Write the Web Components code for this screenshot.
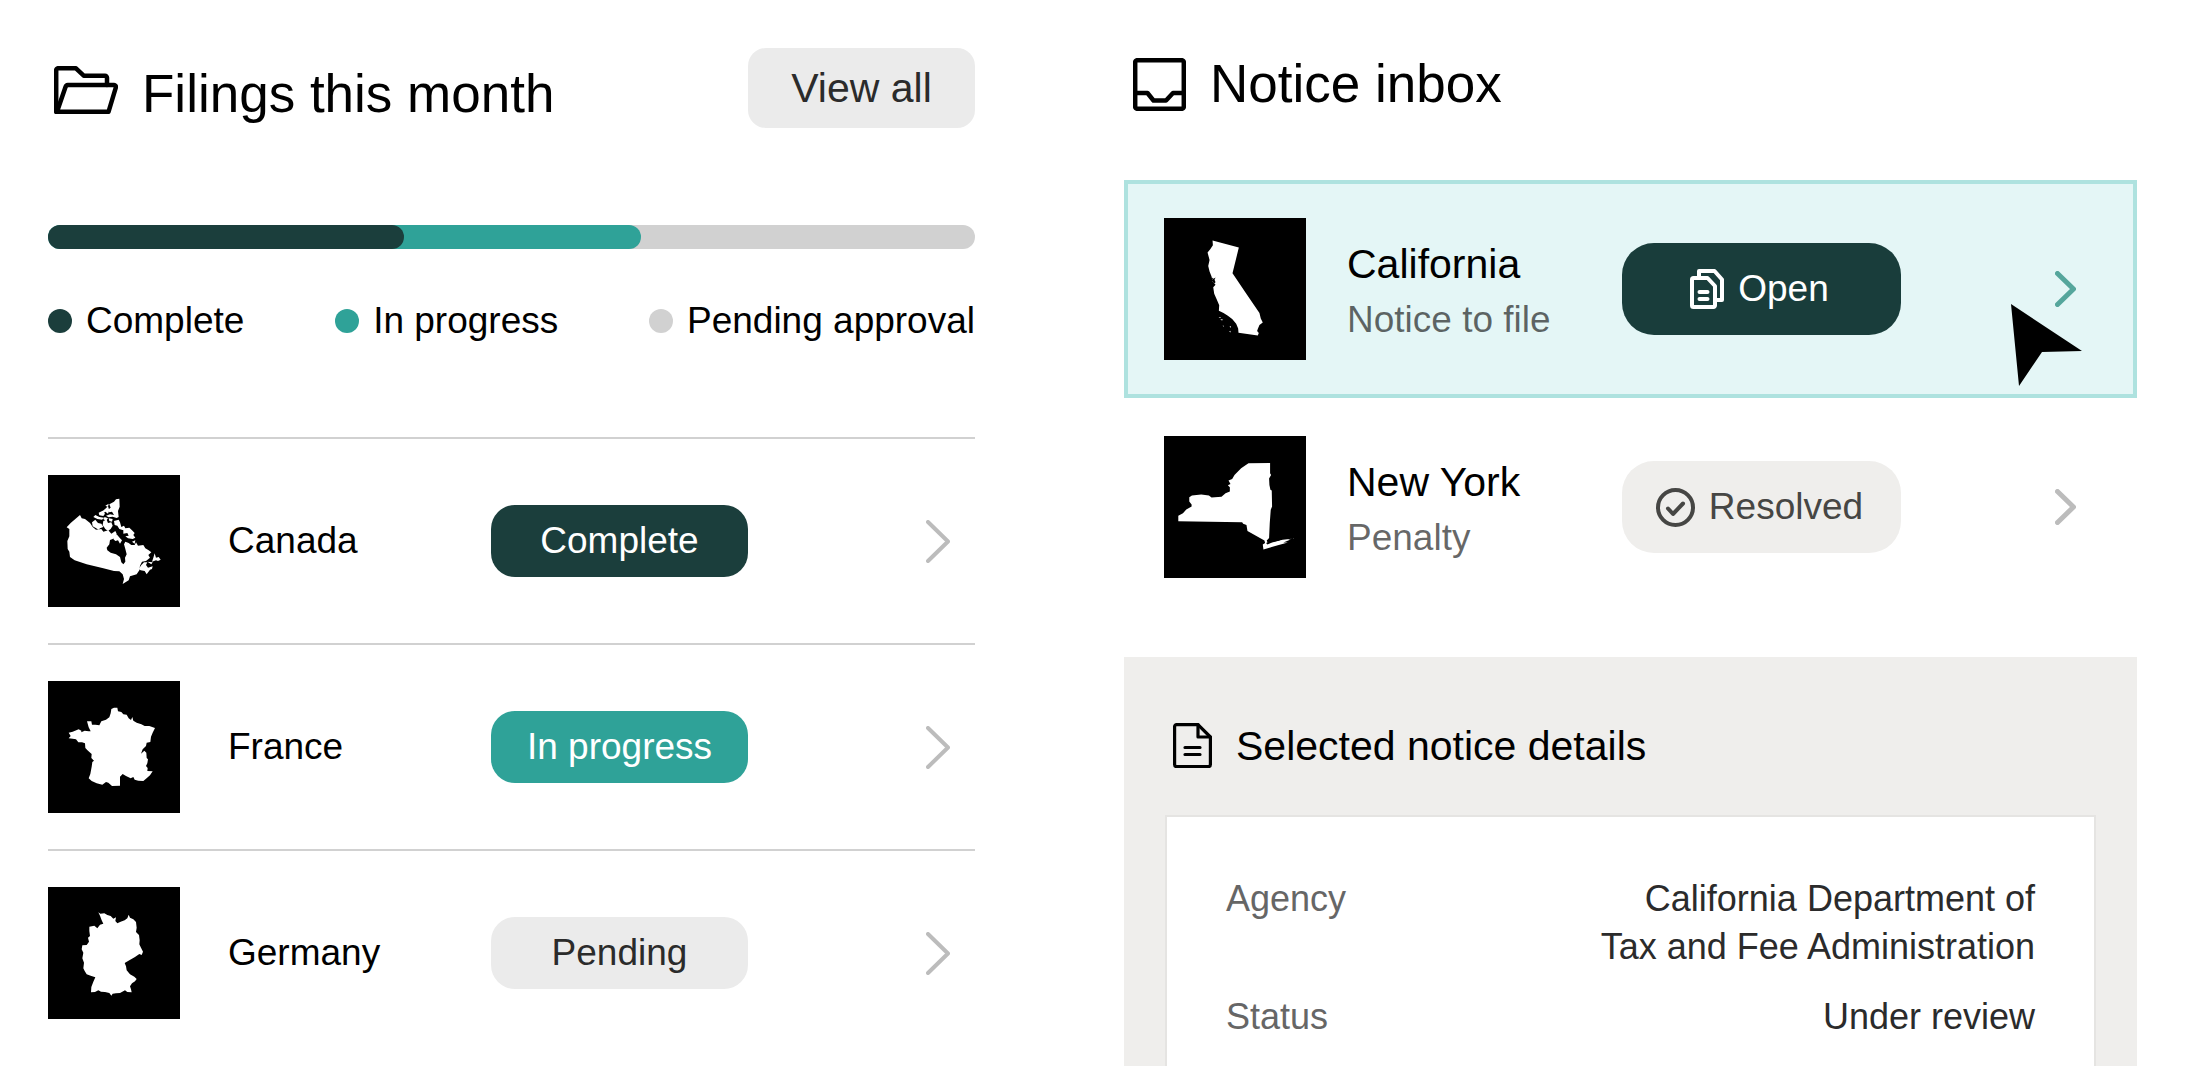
<!DOCTYPE html>
<html lang="en">
<head>
<meta charset="utf-8">
<title>Filings and notices</title>
<style>
  html, body { height: 100%; }
  body {
    margin: 0;
    overflow: hidden;
    background: #fff;
    color: #000;
    font-family: "Liberation Sans", Arial, sans-serif;
    --dark: #1b3e3c;
    --teal: #2fa298;
    --track: #d1d1d1;
    --soft: #ebebeb;
    --stone: #efeeec;
    --title: 53px;
    --large: 41px;
    --text: 37px;
    --small: 36px;
  }
</style>
</head>
<body>
<tax-dashboard>
  <filings-panel slot="filings">
    <panel-heading icon="folder" class="lower">Filings this month</panel-heading>
    <filing-row region="canada" status="complete">Canada<span slot="status">Complete</span></filing-row>
    <filing-row region="france" status="progress">France<span slot="status">In progress</span></filing-row>
    <filing-row region="germany" status="pending">Germany<span slot="status">Pending</span></filing-row>
  </filings-panel>
  <notice-panel slot="notices">
    <panel-heading icon="inbox">Notice inbox</panel-heading>
    <notice-row slot="rows" region="california" icon="documents" status="open" selected>
      California
      <span slot="kind">Notice to file</span>
      <span slot="status">Open</span>
    </notice-row>
    <notice-row slot="rows" region="newyork" icon="check" status="resolved">
      New York
      <span slot="kind">Penalty</span>
      <span slot="status">Resolved</span>
    </notice-row>
    <notice-details slot="details"></notice-details>
  </notice-panel>
</tax-dashboard>

<script>
const ICONS = {
  folder: { w: 64, h: 48, stroke: 4.5, body: `
    <path d="M2.200 46V4.200a2 2 0 0 1 2-2h17.500l8 7.500H51a2 2 0 0 1 2 2V19"/>
    <path d="M3 45.800 11.500 21a3 3 0 0 1 2.500-2h46a2 2 0 0 1 1.800 2.600L54.500 45.800z"/>` },
  inbox: { w: 53, h: 53, stroke: 4.5, body: `
    <rect x="2.200" y="2.200" width="48.600" height="48.600" rx="2"/>
    <path d="M2 35h12.500l6 7.500h12.500l7-7.500h11"/>` },
  document: { w: 39, h: 45, stroke: 3.2, body: `
    <path d="M25 1.600H3.600a2 2 0 0 0-2 2v38a2 2 0 0 0 2 2h31.800a2 2 0 0 0 2-2V14z"/>
    <path d="M25 1.600V14h12.400M12 24.500h15M12 31.500h15"/>` },
  documents: { w: 34, h: 40, stroke: 4, body: `
    <path d="M17.500 9H3.500A1.500 1.500 0 0 0 2 10.500v26A1.500 1.500 0 0 0 3.500 38h20a1.500 1.500 0 0 0 1.500-1.500V17z"/>
    <path d="M9 8V2h15.500L32 10.500V31h-6M9.500 23h8M9.500 30h8"/>` },
  check: { w: 39, h: 39, stroke: 4, body: `
    <circle cx="19.500" cy="19.500" r="17.500"/>
    <path d="m12 20.500 5 5.500L27 15.500"/>` },
  chevron: { w: 24, h: 43, stroke: 4, body: `<path d="m2 2 20 19.500L2 41"/>` },
  next: { w: 21, h: 36, stroke: 5, body: `<path d="m2.500 2.500 16 15.500-16 15.500"/>` },
}

const REGIONS = {
  canada: { box: "24 30 396 396", body: `
    <path d="M120 150 125 160 135 162 150 174 158 186 168 194 184 192 190 200 205 196 214 206 226 198 230 206 224 218 218 222 210 225 208 238 200 248 202 256 212 263 228 268 240 276 244 292 250 298 256 290 255 278 260 268 256 252 252 238 256 230 266 234 274 240 284 240 288 232 294 242 310 240 316 250 326 256 334 262 325 270 330 278 318 288 306 290 300 302 298 316 290 328 270 334 266 346 248 357 252 342 248 328 238 319 222 318 190 310 140 298 104 286 90 276 88 260 83 252 82 228 88 214 88 192 80 187 92 174Z"/>
    <path d="M238 101 239 125 234 138 236 156 230 159 218 155 206 157 198 152 210 148 222 150 216 140 208 142 204 134 212 128 208 118 222 110 228 103ZM222 168 236 164 240 172 244 186 252 182 256 190 268 188 276 196 284 204 280 210 286 218 278 222 264 220 256 214 266 212 262 204 250 206 250 196 238 192 232 182 224 180ZM156 172 166 164 174 174 184 176 190 186 180 190 176 194 166 188 158 184ZM190 168 200 164 204 174 214 172 218 182 212 192 204 198 196 192 188 180ZM176 143 188 137 195 146 190 153 178 151ZM196 131 204 124 208 136 204 146 196 140 188 146 188 138ZM166 150 178 156 192 158 186 164 172 162 160 156ZM194 156 204 160 198 168 190 162ZM206 160 218 162 216 170 208 168ZM196 122 206 116 204 126ZM222 214 230 208 240 220 246 226 240 236 234 226 226 228 220 222ZM276 230 286 226 284 236ZM344 265 348 278 356 276 362 284 354 288 348 286 336 290 340 278ZM304 300 312 292 322 292 318 300 324 308 338 304 336 312 330 314 320 328 314 318 302 316 296 312ZM322 290 338 292 334 298Z"/>` },
  france: { box: "24 33 396 396", body: `
    <path d="M214 117 222 113 232 113 234 124 244 126 250 133 260 134 266 145 273 150 277 141 280 152 290 158 304 163 314 168 328 168 345 174 338 188 333 200 331 216 320 218 318 228 308 238 303 251 313 242 319 248 320 264 324 268 322 280 318 288 323 294 322 303 338 304 330 316 318 326 310 333 295 332 284 329 280 321 272 325 258 318 248 312 240 320 240 347 216 348 205 338 198 336 187 344 170 340 155 333 146 325 151 312 155 290 157 276 162 272 154 264 155 252 144 242 136 234 135 220 126 217 115 217 108 208 98 206 86 205 92 198 86 188 98 185 116 178 124 182 124 187 134 182 146 184 152 184 146 172 141 154 154 154 156 164 166 164 178 166 184 154 198 149 208 142 212 130Z"/>` },
  germany: { box: "24 18 396 396", body: `
    <path d="M175 94 181 98 193 97 202 102 212 105 220 113 228 109 226 120 232 127 242 122 254 118 262 112 266 101 270 110 280 115 288 123 290 140 288 153 297 162 299 178 298 190 303 200 309 212 305 222 298 219 285 228 268 238 254 246 258 256 260 268 270 280 283 287 290 294 285 301 276 307 270 316 273 325 275 334 262 333 255 328 240 336 228 337 218 338 214 344 208 336 195 333 183 332 175 328 165 333 153 334 154 318 160 302 166 289 152 284 140 280 134 270 130 262 132 245 127 232 130 215 125 205 127 193 140 192 147 182 144 170 150 165 148 150 148 137 163 134 172 142 180 131 190 128 185 118 180 104Z"/>` },
  california: { box: "133 144 427 427", body: `
    <path d="M279 212 358 233 339 310 378 368 420 430 424 446 430 458 420 466 415 478 413 484 418 490 415 497 357 489 356 476 350 462 338 448 325 438 312 430 298 423 299 406 292 390 284 372 281 352 288 345 279 335 276 320 270 305 266 288 270 270 264 248 272 238 280 226Z"/>
    <path d="M276 322l6 5 6-4-3 7 3 7-5 5-3-7-7-3 6-3z" fill="#000"/>
    <path d="M297 444l5-2 2 3zM302 448l9 2-4 2zM309 468h4v3zM330 471l4-2v5zM329 485l4-2v5zM334 461l2 4z"/>` },
  newyork: { box: "133 78 427 427", body: `
    <path d="M387 160 452 159 452 190 455 195 449 206 450 225 453 240 457 242 458 290 454 300 451 340 449 385 442 392 445 400 462 396 490 390 524 386 500 400 470 408 432 419 430 404 437 400 435 392 384 364 381 346 371 342 368 337 176 334 176 318 190 310 200 299 216 290 216 284 209 275 209 262 217 257 245 254 268 257 276 263 306 261 318 250 331 245 331 232 325 226 333 222 327 212 338 207 345 195 365 175Z"/>
    <path d="M440 400 460 391 486 389 478 393 458 398 444 404ZM492 398 514 389 506 390 520 384 524 390 508 398Z" fill="#000"/>` },
}

class BaseElement extends HTMLElement {
  constructor() {
    super()
    this.root = this.attachShadow({ mode: "open" })
  }
  connectedCallback() {
    const tpl = document.createElement("template")
    tpl.innerHTML = this.template
    this.root.replaceChildren(tpl.content.cloneNode(true))
  }
  attr(name) { return this.getAttribute(name) || "" }
}

class LineIcon extends BaseElement {
  get template() {
    const { w, h, stroke, body } = ICONS[this.attr("name")]
    return `
<style>
:host { display: block; flex: none; }
svg { display: block; fill: none; stroke: currentColor; stroke-linecap: round; stroke-linejoin: round; }
</style>
<svg width="${w}" height="${h}" viewBox="0 0 ${w} ${h}" stroke-width="${stroke}" aria-hidden="true">${body}</svg>`
  }
}
customElements.define("line-icon", LineIcon)

class RegionThumb extends BaseElement {
  get template() {
    const { box, body } = REGIONS[this.attr("region")]
    return `
<style>
:host { display: block; aspect-ratio: 1; background: #000; }
svg { display: block; width: 100%; height: 100%; fill: #fff; }
</style>
<svg viewBox="${box}" aria-hidden="true">${body}</svg>`
  }
}
customElements.define("region-thumb", RegionThumb)

class PanelHeading extends BaseElement {
  get template() { return `
<style>
:host { display: flex; align-items: center; gap: 24px; padding-left: 6px; }
:host(.lower) { padding-top: 4px; }
:host([icon="inbox"]) { padding: 0 0 0 9px; }
h2 { margin: 0; font-size: var(--title); font-weight: 400; line-height: 64px; }
:host(.lower) h2 { padding-top: 8px; }
</style>
<line-icon name="${this.attr("icon")}"></line-icon>
<h2><slot></slot></h2>`
  }
}
customElements.define("panel-heading", PanelHeading)

class SplitProgress extends BaseElement {
  get template() { return `
<style>
:host { display: grid; height: 24px; border-radius: 12px; background: var(--track); }
i { grid-area: 1 / 1; border-radius: 12px; }
.progress { width: 64%; background: var(--teal); }
.complete { width: 38.4%; background: var(--dark); }
</style>
<i class="progress"></i>
<i class="complete"></i>`
  }
}
customElements.define("split-progress", SplitProgress)

class LegendItem extends BaseElement {
  get template() { return `
<style>
:host { display: flex; align-items: center; gap: 14px; font-size: var(--text); line-height: 48px; white-space: nowrap; }
i { width: 24px; height: 24px; border-radius: 50%; background: var(--track); }
:host([status="complete"]) i { background: var(--dark); }
:host([status="progress"]) i { background: var(--teal); }
</style>
<i></i><slot></slot>`
  }
}
customElements.define("legend-item", LegendItem)

class FilingRow extends BaseElement {
  get template() { return `
<style>
:host {
  display: grid;
  grid-template-columns: 132px 1fr 257px 227px;
  align-items: center;
  padding: 36px 0;
  border-top: 2px solid var(--track);
  font-size: var(--text);
}
.name { padding-left: 48px; }
.pill { border-radius: 24px; line-height: 72px; text-align: center; background: var(--soft); color: #2b2b2b; }
:host([status="complete"]) .pill { background: var(--dark); color: #fff; }
:host([status="progress"]) .pill { background: var(--teal); color: #fff; }
a { justify-self: end; margin-right: 25px; color: #bcbcbc; }
</style>
<region-thumb region="${this.attr("region")}"></region-thumb>
<span class="name"><slot></slot></span>
<span class="pill"><slot name="status"></slot></span>
<a href="#${this.attr("region")}" aria-label="Details"><line-icon name="chevron"></line-icon></a>`
  }
}
customElements.define("filing-row", FilingRow)

class FilingsPanel extends BaseElement {
  get template() { return `
<style>
:host { display: block; }
header { display: flex; justify-content: space-between; align-items: center; }
::slotted(panel-heading) { flex: 1; }
button {
  width: 227px;
  height: 80px;
  border: 0;
  border-radius: 18px;
  background: var(--soft);
  color: #2b2b2b;
  font: inherit;
  font-size: var(--large);
}
split-progress { margin-top: 97px; }
.legend { display: flex; justify-content: space-between; margin: 48px 0 92px; }
</style>
<header>
  <slot name="heading"></slot>
  <button type="button">View all</button>
</header>
<split-progress></split-progress>
<div class="legend">
  <legend-item status="complete">Complete</legend-item>
  <legend-item status="progress">In progress</legend-item>
  <legend-item status="pending">Pending approval</legend-item>
</div>
<slot></slot>`
  }
  connectedCallback() {
    this.querySelector("panel-heading").slot = "heading"
    super.connectedCallback()
  }
}
customElements.define("filings-panel", FilingsPanel)

class NoticeRow extends BaseElement {
  get template() {
    const selected = this.hasAttribute("selected")
    const tag = this.attr("status") == "open" ? "button" : "span"
    return `
<style>
:host {
  position: relative;
  display: grid;
  grid-template-columns: 142px 1fr 279px 232px;
  align-items: center;
  padding: 34px 0 34px 36px;
  border: 4px solid transparent;
  font-size: var(--text);
}
:host([selected]) { background: #e4f6f6; border-color: #aee2df; }
.text { padding: 6px 0 0 41px; line-height: 56px; white-space: nowrap; }
.name { font-size: var(--large); }
.kind { color: rgba(0, 0, 0, .6); }
.pill {
  display: flex;
  justify-content: center;
  align-items: center;
  gap: 14px;
  box-sizing: border-box;
  width: 100%;
  height: 92px;
  padding: 0 4px 0 0;
  border: 0;
  border-radius: 32px;
  background: var(--stone);
  color: #464644;
  font: inherit;
}
:host([status="open"]) .pill { background: #193d3b; color: #fff; }
a { justify-self: end; margin-right: 57px; color: #bcbcbc; }
:host([selected]) a { color: #55a69c; }
.cursor { position: absolute; right: 51px; bottom: 8px; }
</style>
<region-thumb region="${this.attr("region")}"></region-thumb>
<div class="text">
  <div class="name"><slot></slot></div>
  <div class="kind"><slot name="kind"></slot></div>
</div>
<${tag} class="pill"><line-icon name="${this.attr("icon")}"></line-icon><slot name="status"></slot></${tag}>
<a href="#${this.attr("region")}" aria-label="Details"><line-icon name="next"></line-icon></a>
${selected ? `<svg class="cursor" width="71" height="82" viewBox="0 0 71 82" aria-hidden="true"><path d="M0 0l71 47-40 1L8 82z"/></svg>` : ""}`
  }
}
customElements.define("notice-row", NoticeRow)

class NoticeDetails extends BaseElement {
  get template() { return `
<style>
:host { display: flex; flex-direction: column; padding: 63px 41px 0; background: var(--stone); }
header { display: flex; align-items: center; gap: 24px; padding: 0 0 45px 8px; }
h3 { margin: 0; padding-top: 2px; font-size: var(--large); font-weight: 400; line-height: 48px; }
dl {
  flex: 1;
  display: flex;
  flex-direction: column;
  gap: 22px;
  margin: 0;
  padding: 58px 59px 0;
  border: 2px solid #e5e4e2;
  border-bottom: 0;
  background: #fff;
  font-size: var(--small);
  line-height: 48px;
}
div { display: flex; justify-content: space-between; }
dt { color: #666; }
dd { margin: 0; color: #2b2b2b; text-align: right; }
</style>
<header>
  <line-icon name="document"></line-icon>
  <h3>Selected notice details</h3>
</header>
<dl>
  <div><dt>Agency</dt><dd>California Department of<br>Tax and Fee Administration</dd></div>
  <div><dt>Status</dt><dd>Under review</dd></div>
</dl>`
  }
}
customElements.define("notice-details", NoticeDetails)

class NoticePanel extends BaseElement {
  get template() { return `
<style>
:host { display: flex; flex-direction: column; }
::slotted(panel-heading) { margin: 4px 0 64px; }
::slotted(notice-details) { flex: 1; margin-top: 41px; }
</style>
<slot></slot>
<slot name="rows"></slot>
<slot name="details"></slot>`
  }
}
customElements.define("notice-panel", NoticePanel)

class TaxDashboard extends BaseElement {
  get template() { return `
<style>
:host {
  display: grid;
  grid-template-columns: 927fr 1013fr;
  column-gap: 149px;
  box-sizing: border-box;
  min-height: 100%;
  padding: 48px 48px 0;
}
</style>
<slot name="filings"></slot>
<slot name="notices"></slot>`
  }
}
customElements.define("tax-dashboard", TaxDashboard)
</script>
</body>
</html>
